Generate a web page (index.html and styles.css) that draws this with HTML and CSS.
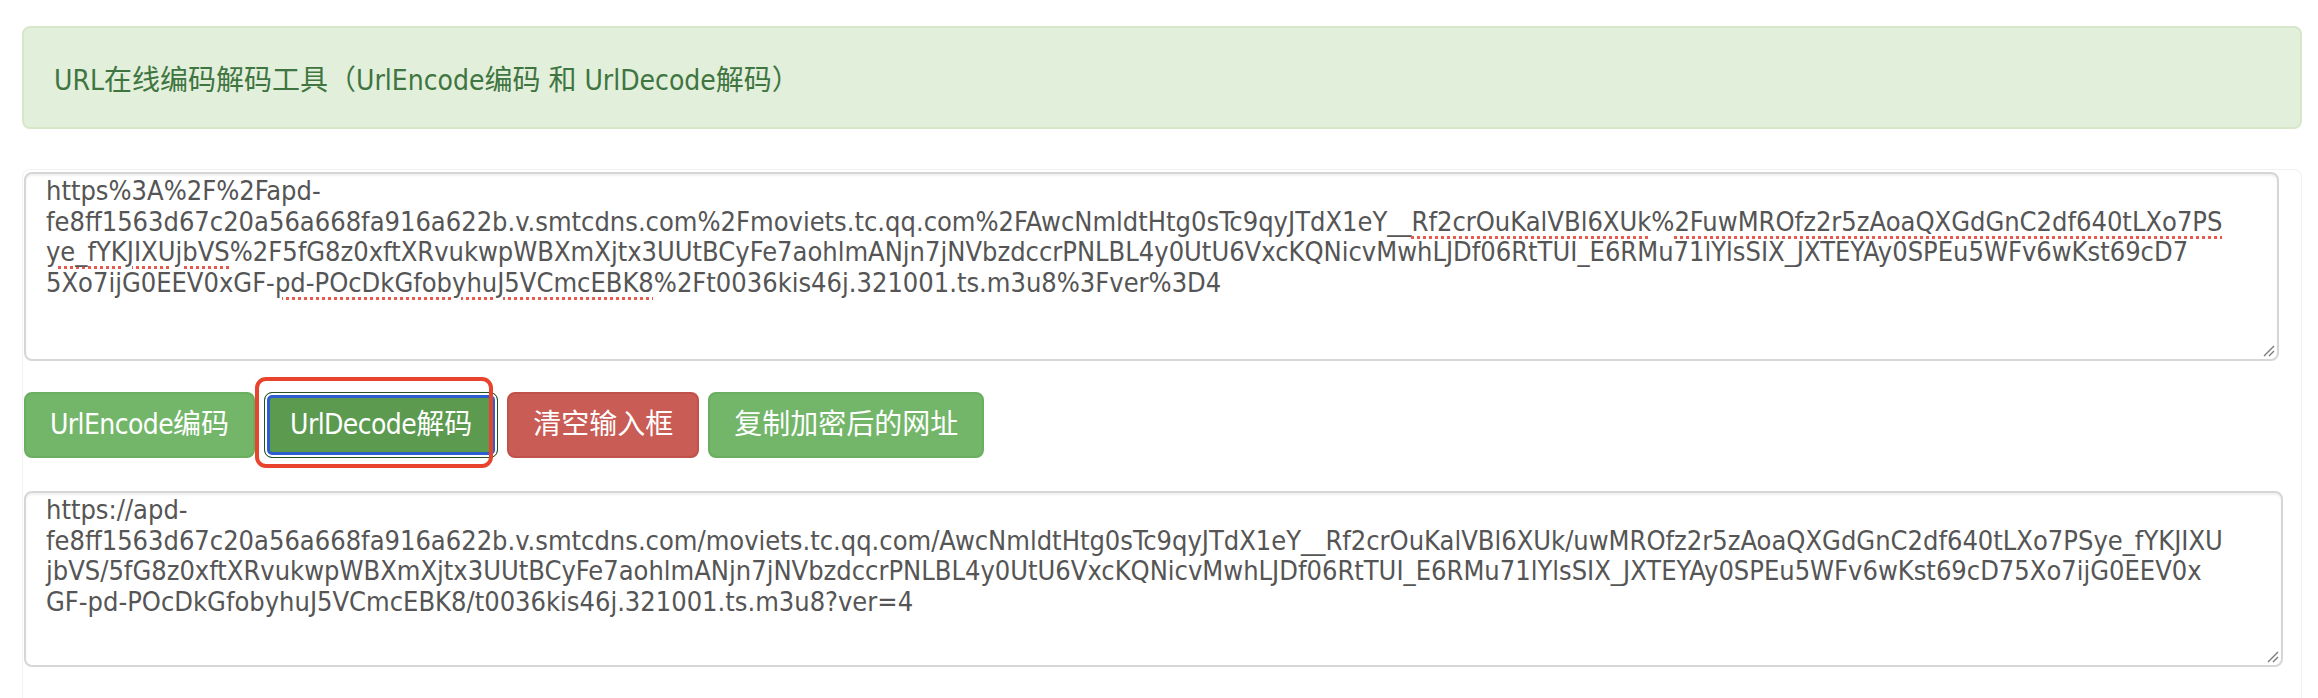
FILE: index.html
```html
<!DOCTYPE html>
<html lang="zh-CN">
<head>
<meta charset="utf-8">
<title>URL在线编码解码工具</title>
<link rel="stylesheet" href="styles.css">
</head>
<body>
<div class="page">
  <div class="alert">URL在线编码解码工具（UrlEncode编码 和 UrlDecode解码）</div>
  <div class="panel">
    <div class="textbox tb1" role="textbox" aria-multiline="true">
      <span class="ln">https%3A%2F%2Fapd-</span>
      <span class="ln">fe8ff1563d67c20a56a668fa916a622b.v.smtcdns.com%2Fmoviets.tc.qq.com%2FAwcNmldtHtg0sTc9qyJTdX1eY__<span class="sp">Rf2crOuKalVBl6XUk</span>%<span class="sp">2FuwMROfz2r5zAoaQXGdGnC2df640tLXo7PS</span></span>
      <span class="ln"><span class="sp">ye_fYKJIXUjbVS</span>%2F5fG8z0xftXRvukwpWBXmXjtx3UUtBCyFe7aohlmANjn7jNVbzdccrPNLBL4y0UtU6VxcKQNicvMwhLJDf06RtTUI_E6RMu71lYlsSIX_JXTEYAy0SPEu5WFv6wKst69cD7</span>
      <span class="ln">5Xo7ijG0EEV0xGF-<span class="sp">pd-POcDkGfobyhuJ5VCmcEBK8</span>%2Ft0036kis46j.321001.ts.m3u8%3Fver%3D4</span>
      <svg class="grip" width="14" height="14" viewBox="0 0 14 14"><path d="M13 3 L3 13 M13 8 L8 13" stroke="#7a7a7a" stroke-width="1.4" fill="none"/></svg>
    </div>
    <div class="actions">
      <button class="btn btn-success"><span class="lat">UrlEncode</span>编码</button>
      <button class="btn btn-success is-focus"><span class="lat">UrlDecode</span>解码</button>
      <button class="btn btn-danger">清空输入框</button>
      <button class="btn btn-success">复制加密后的网址</button>
      <span class="annot"></span>
    </div>
    <div class="textbox tb2" role="textbox" aria-multiline="true">
      <span class="ln">https://apd-</span>
      <span class="ln">fe8ff1563d67c20a56a668fa916a622b.v.smtcdns.com/moviets.tc.qq.com/AwcNmldtHtg0sTc9qyJTdX1eY__Rf2crOuKalVBl6XUk/uwMROfz2r5zAoaQXGdGnC2df640tLXo7PSye_fYKJIXU</span>
      <span class="ln">jbVS/5fG8z0xftXRvukwpWBXmXjtx3UUtBCyFe7aohlmANjn7jNVbzdccrPNLBL4y0UtU6VxcKQNicvMwhLJDf06RtTUI_E6RMu71lYlsSIX_JXTEYAy0SPEu5WFv6wKst69cD75Xo7ijG0EEV0x</span>
      <span class="ln">GF-pd-POcDkGfobyhuJ5VCmcEBK8/t0036kis46j.321001.ts.m3u8?ver=4</span>
      <svg class="grip" width="14" height="14" viewBox="0 0 14 14"><path d="M13 3 L3 13 M13 8 L8 13" stroke="#7a7a7a" stroke-width="1.4" fill="none"/></svg>
    </div>
  </div>
</div>
</body>
</html>
```

FILE: styles.css
```css
html, body {
  margin: 0;
  background: #ffffff;
}
body {
  font-family: "DejaVu Sans Condensed", "DejaVu Sans", "Noto Sans CJK SC", sans-serif;
  font-stretch: condensed;
}
.page {
  padding: 26px 0 0 22px;
}
.alert {
  box-sizing: border-box;
  width: 2280px;
  height: 103px;
  display: flex;
  align-items: center;
  padding: 0 30px;
  border: 2px solid #d7e7ca;
  border-radius: 8px;
  background: #e2efdb;
  color: #3f7540;
  font-size: 28px;
}
.panel {
  box-sizing: border-box;
  width: 2280px;
  height: 540px;
  margin-top: 40px;
  padding: 2px 0 0 1px;
  border: 1px solid #f1f1f1;
  border-radius: 8px;
}
.textbox {
  position: relative;
  box-sizing: border-box;
  padding: 2px 20px 0 20px;
  border: 2px solid #d6d6d6;
  border-radius: 8px;
  box-shadow: inset 0 2px 2px rgba(0, 0, 0, 0.06);
  color: #555555;
  font-size: 27px;
  line-height: 30.5px;
  white-space: nowrap;
  overflow: hidden;
}
.tb1 {
  width: 2255px;
  height: 189px;
}
.tb2 {
  width: 2259px;
  height: 176px;
  margin-top: 33px;
}
.ln {
  display: block;
}
.sp {
  text-decoration: underline dotted #ea5a4c;
  text-decoration-thickness: 3px;
  text-underline-offset: 5px;
}
.grip {
  position: absolute;
  right: 2px;
  bottom: 2px;
}
.actions {
  position: relative;
  display: flex;
  gap: 9px;
  margin-top: 31px;
}
.btn {
  box-sizing: border-box;
  height: 66px;
  padding: 0 24px;
  border: 2px solid transparent;
  border-radius: 8px;
  font-family: inherit;
  font-size: 28px;
  line-height: 40px;
  color: #ffffff;
  cursor: pointer;
}
.lat {
  letter-spacing: -0.6px;
}
.btn-success {
  background: #73b66a;
  border-color: #6aae60;
}
.btn-danger {
  background: #c95c55;
  border-color: #c1524b;
}
.btn.is-focus {
  padding: 0 25px;
  background: #5b9a4f;
  border: 1px solid #24511f;
  box-shadow: inset 0 0 0 2px #ffffff, inset 0 0 0 5px #2d5ed0;
}
.annot {
  position: absolute;
  left: 231px;
  top: -15px;
  width: 238px;
  height: 91px;
  box-sizing: border-box;
  border: 4.5px solid #e8432c;
  border-radius: 11px;
  pointer-events: none;
}
```
